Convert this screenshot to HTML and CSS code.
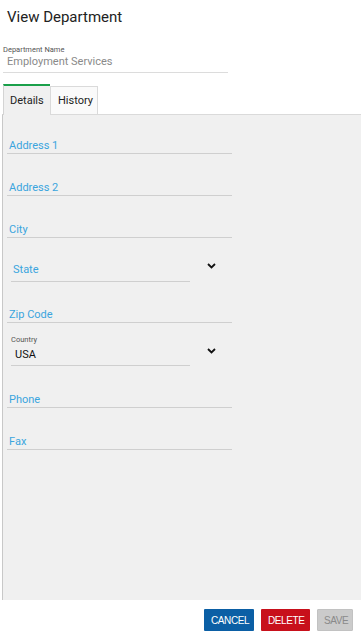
FILE: index.html
```html
<!DOCTYPE html>
<html lang="en">
<head>
    <meta charset="UTF-8">
    <title>View Department</title>
    <link rel="stylesheet" href="styles.css">
</head>
<body>
    <h1 class="title">View Department</h1>

    <div class="dept-name">
        <label>Department Name</label>
        <div class="dept-value">Employment Services</div>
    </div>

    <div class="tabs">
        <div class="tab active">Details</div>
        <div class="tab">History</div>
    </div>

    <div class="panel">
        <div class="field"><span>Address 1</span></div>
        <div class="field"><span>Address 2</span></div>
        <div class="field"><span>City</span></div>
        <div class="select-row">
            <div class="select state"><span>State</span></div>
            <svg class="chevron" width="9" height="6" viewBox="0 0 9 6"><path d="M1 1l3.5 3.5L8 1" fill="none" stroke="#111" stroke-width="1.8"/></svg>
        </div>
        <div class="field zip"><span>Zip Code</span></div>
        <div class="select-row country-row">
            <div class="select country">
                <small>Country</small>
                <div class="value">USA</div>
            </div>
            <svg class="chevron" width="9" height="6" viewBox="0 0 9 6"><path d="M1 1l3.5 3.5L8 1" fill="none" stroke="#111" stroke-width="1.8"/></svg>
        </div>
        <div class="field phone"><span>Phone</span></div>
        <div class="field"><span>Fax</span></div>
    </div>

    <div class="actions">
        <button class="btn cancel">CANCEL</button>
        <button class="btn delete">DELETE</button>
        <button class="btn save" disabled>SAVE</button>
    </div>
</body>
</html>
```

FILE: styles.css
```css
body {
    margin: 0;
    background: #fff;
    color: #222;
    font-family: Roboto, "Noto Sans", sans-serif;
}
.title {
    margin: 0;
    padding: 8px 0 0 7px;
    height: 26px;
    font-size: 15px;
    font-weight: 400;
    line-height: 18px;
}
.dept-name {
    margin: 11px 0 0 3px;
    width: 225px;
    border-bottom: 1px solid #dcdcdc;
    padding-bottom: 4px;
}
.dept-name label {
    display: block;
    font-size: 7.5px;
    line-height: 10px;
    color: #555;
}
.dept-value {
    padding-left: 4px;
    font-size: 11px;
    line-height: 13px;
    color: #8a8a8a;
}
.tabs {
    display: flex;
    align-items: flex-end;
    margin: 11px 0 0 3px;
    height: 30px;
}
.tab {
    font-size: 11px;
    color: #222;
    box-sizing: border-box;
}
.tab.active {
    width: 47px;
    height: 31px;
    margin-bottom: -1px;
    background: #f0f0f0;
    border-top: 2px solid #1aa04a;
    border-left: 1px solid #d4d4d4;
    padding: 8px 0 0 6px;
    position: relative;
    z-index: 1;
}
.tab:not(.active) {
    width: 48px;
    height: 28px;
    background: #fafafa;
    border: 1px solid #dadada;
    border-bottom: none;
    padding: 7px 0 0 7px;
}
.panel {
    margin-left: 2px;
    width: 359px;
    height: 486px;
    box-sizing: border-box;
    background: #f0f0f0;
    border-top: 1px solid #dadada;
    border-left: 1px solid #c8c8c8;
}
.field {
    margin: 28px 0 0 4px;
    width: 225px;
    height: 13px;
    border-bottom: 1px solid #cfcfcf;
}
.field:first-child {
    margin-top: 25px;
}
.field span, .select span {
    display: block;
    padding-left: 2px;
    font-size: 11px;
    line-height: 12px;
    color: #3aa5de;
}
.select-row {
    display: flex;
    align-items: flex-start;
    margin-left: 8px;
}
.select {
    width: 179px;
    border-bottom: 1px solid #cfcfcf;
    box-sizing: border-box;
}
.select.state {
    margin-top: 25px;
    height: 19px;
}
.select.state span {
    padding-top: 1px;
}
.chevron {
    margin: 25px 0 0 17px;
}
.zip {
    margin-top: 27px;
}
.select.country {
    margin-top: 10px;
    height: 33px;
    padding: 2px 0 0 0;
}
.select small {
    display: block;
    font-size: 7.5px;
    line-height: 10px;
    color: #555;
}
.select .value {
    padding: 3px 0 0 4px;
    font-size: 11px;
    line-height: 13px;
    color: #111;
}
.country-row .chevron {
    margin-top: 25px;
}
.phone {
    margin-top: 28px;
}
.actions {
    display: flex;
    justify-content: flex-end;
    gap: 7px;
    padding: 9px 10px 0 0;
}
.btn {
    height: 22px;
    padding: 0 6px;
    border: 1px solid transparent;
    border-radius: 1px;
    font-family: "Liberation Sans", Arial, sans-serif;
    font-size: 10px;
    letter-spacing: -0.4px;
    color: #fff;
}
.cancel {
    width: 50px;
    background: #0b5fa5;
}
.delete {
    width: 49px;
    background: #c8101b;
}
.save {
    width: 36px;
    background: #cbcbcb;
    color: #8a8a8a;
    border-color: #c2c2c2;
}
```
